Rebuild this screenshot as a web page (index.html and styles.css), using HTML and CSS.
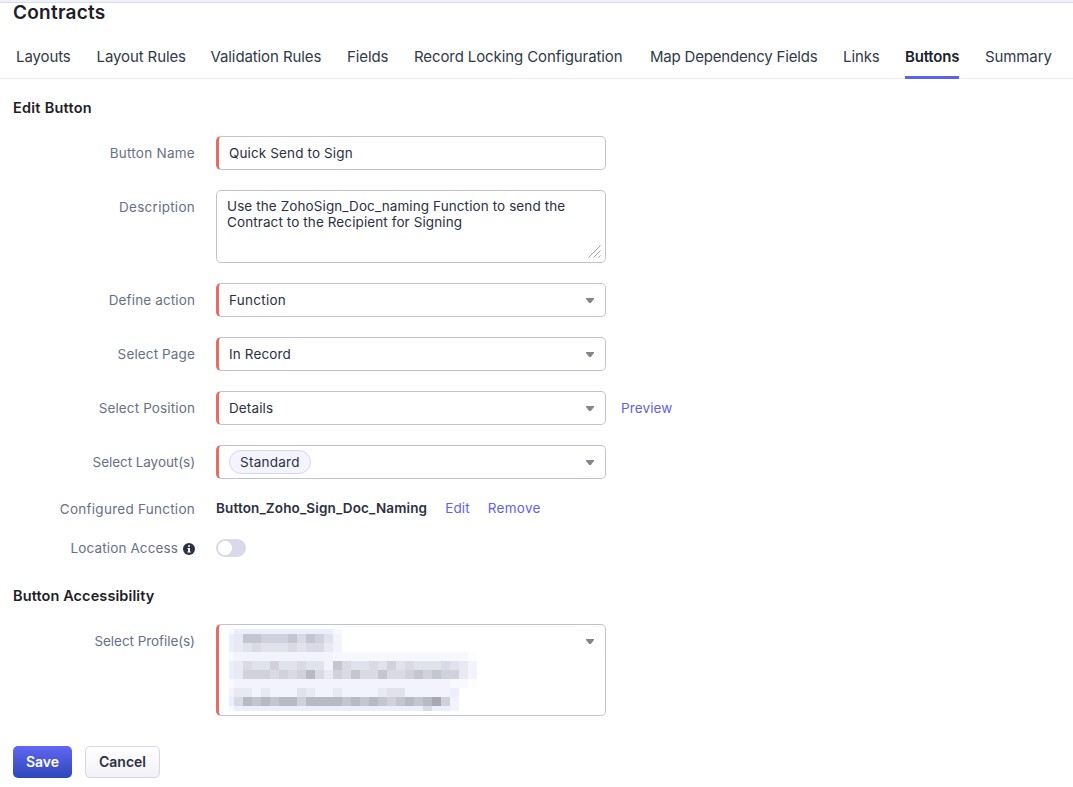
FILE: index.html
```html
<!DOCTYPE html>
<html lang="en">
<head>
<meta charset="utf-8">
<title>Contracts</title>
<link rel="stylesheet" href="styles.css">
</head>
<body>
<div class="topbar"></div>
<h1 class="title">Contracts</h1>
<nav class="tabs">
  <a class="tab">Layouts</a>
  <a class="tab">Layout Rules</a>
  <a class="tab">Validation Rules</a>
  <a class="tab">Fields</a>
  <a class="tab">Record Locking Configuration</a>
  <a class="tab dense">Map Dependency Fields</a>
  <a class="tab">Links</a>
  <a class="tab active">Buttons</a>
  <a class="tab">Summary</a>
</nav>
<main class="form">
  <h2 class="heading">Edit Button</h2>
  <div class="row"><label class="label wide">Button Name</label><div class="field required">Quick Send to Sign</div></div>
  <div class="row"><label class="label wide">Description</label>
    <div class="field area">Use the ZohoSign_Doc_naming Function to send the<br>Contract to the Recipient for Signing
      <svg class="grip" width="13" height="13" viewBox="0 0 13 13"><path d="M0.5 12.5 12.5 0.5M5.5 12.5 12.5 5.5M10.5 12.5 12.5 10.5" stroke="#a0a0a6" fill="none"/></svg>
    </div>
  </div>
  <div class="row"><label class="label">Define action</label><div class="field required wide">Function<i class="caret"></i></div></div>
  <div class="row"><label class="label">Select Page</label><div class="field required">In Record<i class="caret"></i></div></div>
  <div class="row"><label class="label">Select Position</label><div class="field required">Details<i class="caret"></i></div><a class="link preview">Preview</a></div>
  <div class="row"><label class="label dense">Select Layout(s)</label><div class="field required wide"><span class="chip">Standard</span><i class="caret"></i></div></div>
  <div class="row configured"><label class="label wide">Configured Function</label><strong class="function">Button_Zoho_Sign_Doc_Naming</strong><a class="link edit">Edit</a><a class="link remove">Remove</a></div>
  <div class="row location"><label class="label">Location Access
    <svg class="info" width="12" height="12" viewBox="0 0 12 12"><circle cx="6" cy="6" r="6" fill="#2c3042"/><path d="M5 2.2h2v1.6H5zM4.5 5H7v3.4h.7v1H4.4v-1h.7V6h-.6z" fill="#fff"/></svg></label>
    <span class="toggle"></span></div>
  <h2 class="heading access">Button Accessibility</h2>
  <div class="row"><label class="label dense">Select Profile(s)</label><div class="field required profiles"><svg class="mosaic" id="mosaic" width="248" height="82" shape-rendering="crispEdges"></svg><i class="caret"></i></div></div>
  <div class="actions"><button class="btn save">Save</button><button class="btn cancel">Cancel</button></div>
</main>
<script src="mosaic.js"></script>
</body>
</html>
```
FILE: styles.css
```css
* { box-sizing: border-box; }
body { margin: 0; background: #fff; color: #2c3042; font: 13.5px/20px Inter, sans-serif; letter-spacing: .13px; height: 787px; overflow: hidden; }
.topbar { height: 3px; background: #f0f2fa; border-bottom: 1px solid #dadaf0; }
.title { margin: 0 0 0 13px; font-size: 19px; line-height: 20px; font-weight: 600; color: #1f2027; letter-spacing: .25px; }
.tabs { display: grid; grid-template-columns: 54.5px 88px 110.5px 41px 210px 167px 36px 54px 68px; column-gap: 26px; height: 56px; padding-left: 16px; border-bottom: 1px solid #ededf1; }
.tab { height: 56px; padding-top: 24px; font-size: 15px; letter-spacing: -.1px; white-space: nowrap; color: #313949; border-bottom: 3px solid transparent; }
.tab.dense { letter-spacing: -.19px; }
.tab.active { font-weight: 600; letter-spacing: -.2px; color: #20222c; border-bottom-color: #5a62ef; border-radius: 2px 2px 0 0; }
.form { padding: 19px 0 0 13px; }
.heading { margin: 0; font-size: 14.5px; line-height: 20px; font-weight: 600; color: #1f2027; letter-spacing: .25px; }
.heading.access { letter-spacing: .1px; }
.heading + .row { margin-top: 18px; }
.row { display: flex; margin-bottom: 20px; }
.label { width: 182px; margin-right: 21px; padding-top: 7px; text-align: right; color: #687088; white-space: nowrap; }
.wide { letter-spacing: .26px; }
.dense { letter-spacing: -.06px; }
.field { position: relative; width: 390px; height: 34px; display: flex; align-items: center; padding-left: 12px; border: 1px solid #c3c2d3; border-radius: 5px; }
.required { padding-left: 10px; border-left: 3px solid #e86c60; }
.area { display: block; height: 73px; padding: 7px 10px; line-height: 16px; letter-spacing: .1px; white-space: nowrap; }
.grip { position: absolute; right: 4px; bottom: 4px; }
.caret { position: absolute; right: 11px; top: 14px; width: 8px; height: 5px; background: #85858f; clip-path: polygon(0 0, 100% 0, 100% 20%, 60% 100%, 40% 100%, 0 20%); }
.chip { height: 24px; padding: 0 10px; line-height: 22px; border: 1px solid #d5d5fa; border-radius: 12px; background: #f4f4fe; }
.link { color: #5e62ee; }
.preview { padding: 7px 0 0 15px; }
.configured { height: 20px; align-items: flex-start; margin: 0 0 19px; }
.configured .label { padding-top: 0; }
.location .label { padding-top: 0; }
.configured .function, .configured .link { margin-top: -1px; }
.function { font-weight: 600; }
.edit { margin: 0 18px; }
.remove { letter-spacing: .3px; }
.location { height: 20px; align-items: center; margin: 0 0 28px; }
.info { vertical-align: -2px; margin-left: 1px; }
.toggle { width: 30px; height: 18px; border-radius: 9px; background: radial-gradient(circle at 9px 9px, #fff 6.7px, #d9d9e9 7.3px); }
.profiles { height: 92px; }
.mosaic { display: block; }
.access + .row { margin-bottom: 30px; }
.actions { display: flex; gap: 13px; }
.btn { height: 32px; padding: 0; border-radius: 5px; font: 600 14px/20px Inter, sans-serif; }
.save { width: 59px; border: 0; color: #fff; background: linear-gradient(#6266f2, #2c48b8); }
.cancel { width: 75px; border: 1px solid #d8d5e8; color: #2c3042; background: linear-gradient(#fff, #f2f1f8); }
```
FILE: mosaic.js
```js
// Redacted profile names, drawn as a grid of 9px blocks.
const colors = {
  a: '#f8f8ff', b: '#ebeeff', c: '#f3f3fe', d: '#e1e3ec', e: '#d9dae6', f: '#d0d1dc',
  g: '#c3c5cf', h: '#b7b9c5', i: '#f7f8fe', j: '#a8a8b3', k: '#fdfdfe', m: '#e9e9f4'
};
const rows = [
  'abbbbbbbbbbba',
  'bmggfffgegfdc',
  'bmdedddedeemc',
  'accccccccccciiiiiiiiiiiiiiik',
  'bmeddfddeddcgeddedfdedddedmc',
  'bmfffefefhemfegeegeefgfgffmc',
  'accccccccccccccccccccccccaak',
  'cmmcmcccdmccmccccmddcccccb',
  'behghghhfhhhhghghgfghghjfc',
  'abbbbbbbbbbbbbbbbbbbbbebbc'
];
const svg = document.getElementById('mosaic');
rows.forEach((row, r) => [...row].forEach((key, c) => {
  const rect = document.createElementNS('http://www.w3.org/2000/svg', 'rect');
  rect.setAttribute('x', c ? 5 + (c - 1) * 9 : 0);
  rect.setAttribute('y', r ? 5 + (r - 1) * 9 : 0);
  rect.setAttribute('width', c ? 9 : 5);
  rect.setAttribute('height', r && r < 9 ? 9 : 5);
  rect.setAttribute('fill', colors[key]);
  svg.append(rect);
}));
```
